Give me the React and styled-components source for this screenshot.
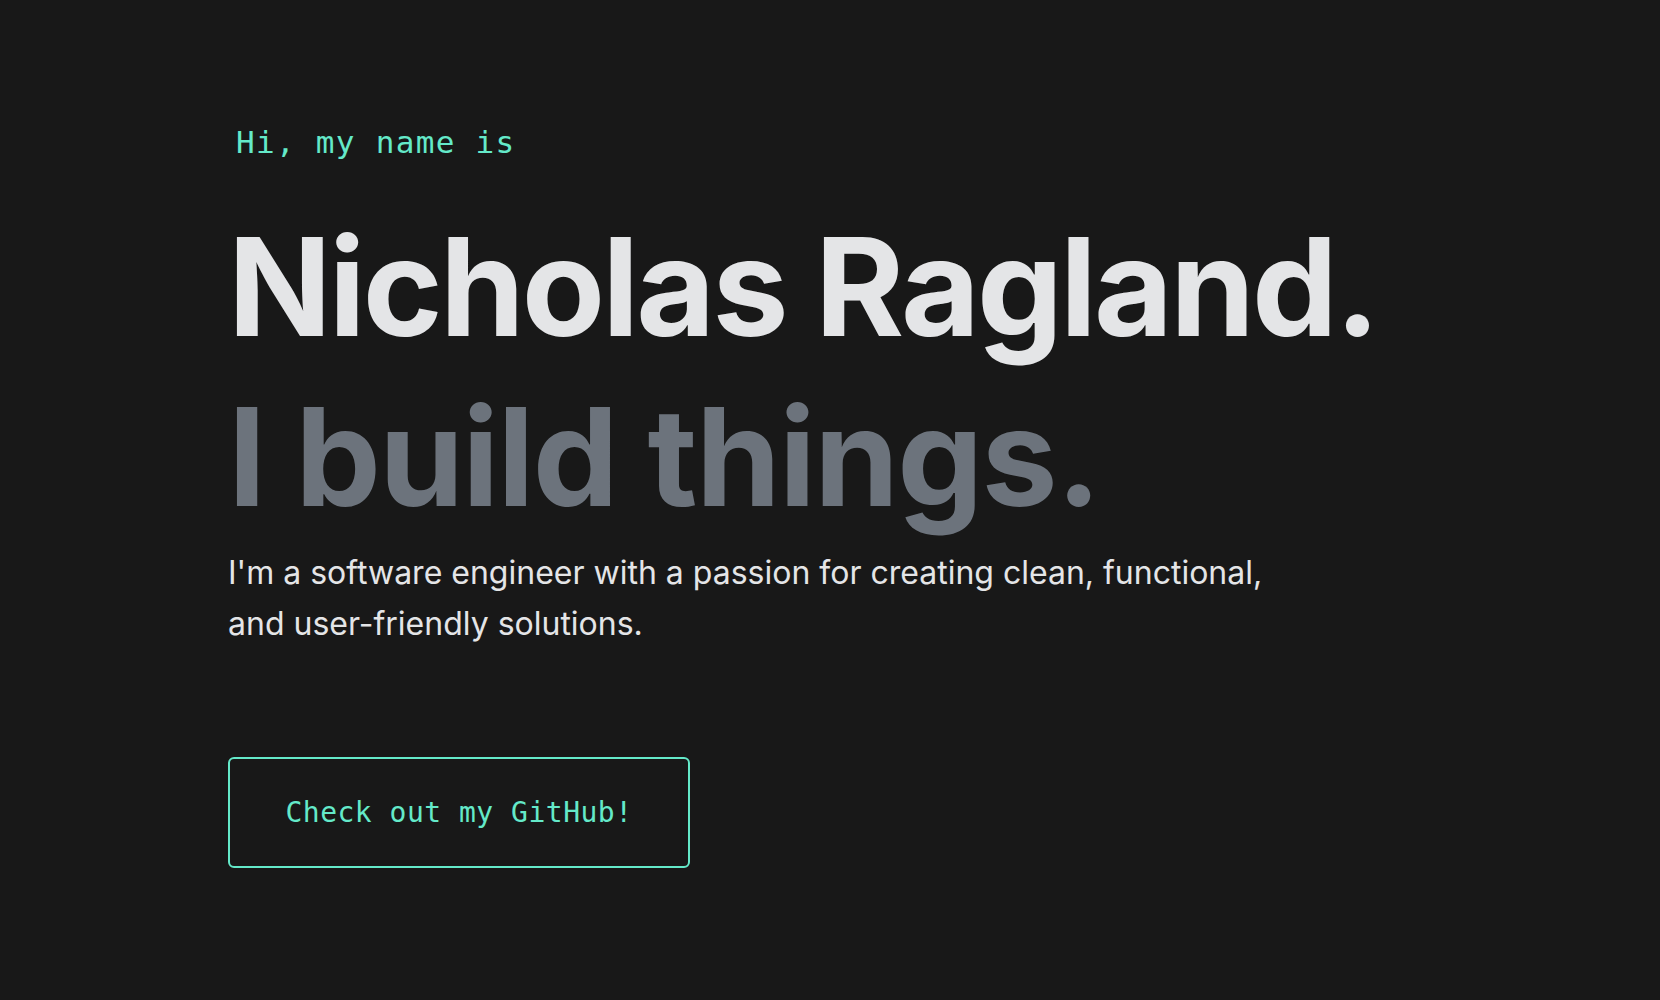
import React from 'react'
import styled, { createGlobalStyle } from 'styled-components'

const GlobalStyle = createGlobalStyle`
  html, body {
    margin: 0;
    padding: 0;
    background: #181818;
  }
  body {
    font-family: Inter, "Noto Sans", sans-serif;
    -webkit-font-smoothing: antialiased;
  }
`;

function App() {
  return (
    <>
      <GlobalStyle />
      <Hero>
        <Greeting>Hi, my name is</Greeting>
        <Title>
          <TitleLine>Nicholas Ragland.</TitleLine>
          <TitleLine muted>I build things.</TitleLine>
        </Title>
        <Intro>
          I'm a software engineer with a passion for creating clean, functional,
          and user-friendly solutions.
        </Intro>
        <GithubButton href='#'>Check out my GitHub!</GithubButton>
      </Hero>
    </>
  )
}

const Hero = styled.section`
  min-height: 1000px;
  box-sizing: border-box;
  padding: 120px 0 0 228px;
  display: flex;
  flex-direction: column;
  align-items: flex-start;
`;

const Greeting = styled.p`
  margin: 0 0 0 8px;
  font-family: "DejaVu Sans Mono", "Liberation Mono", monospace;
  font-size: 31px;
  letter-spacing: 1.3px;
  line-height: 44px;
  color: #64e9c9;
`;

const Title = styled.h1`
  margin: 38px 0 0;
  font-weight: 700;
  font-size: 136px;
`;

const TitleLine = styled.span`
  display: block;
  line-height: 170px;
  letter-spacing: ${({ muted }) => (muted ? '-0.012em' : '-0.021em')};
  color: ${({ muted }) => (muted ? '#6c737c' : '#e4e5e7')};
`;

const Intro = styled.p`
  margin: 5px 0 0;
  max-width: 1060px;
  font-size: 32px;
  line-height: 51px;
  font-weight: 400;
  color: #e4e5e7;
`;

const GithubButton = styled.a`
  margin-top: 108px;
  display: flex;
  align-items: center;
  justify-content: center;
  box-sizing: border-box;
  width: 462px;
  height: 111px;
  border: 2px solid #64e9c9;
  border-radius: 6px;
  font-family: "DejaVu Sans Mono", "Liberation Mono", monospace;
  font-size: 28px;
  letter-spacing: 0.5px;
  color: #64e9c9;
  text-decoration: none;
`;

export default App
